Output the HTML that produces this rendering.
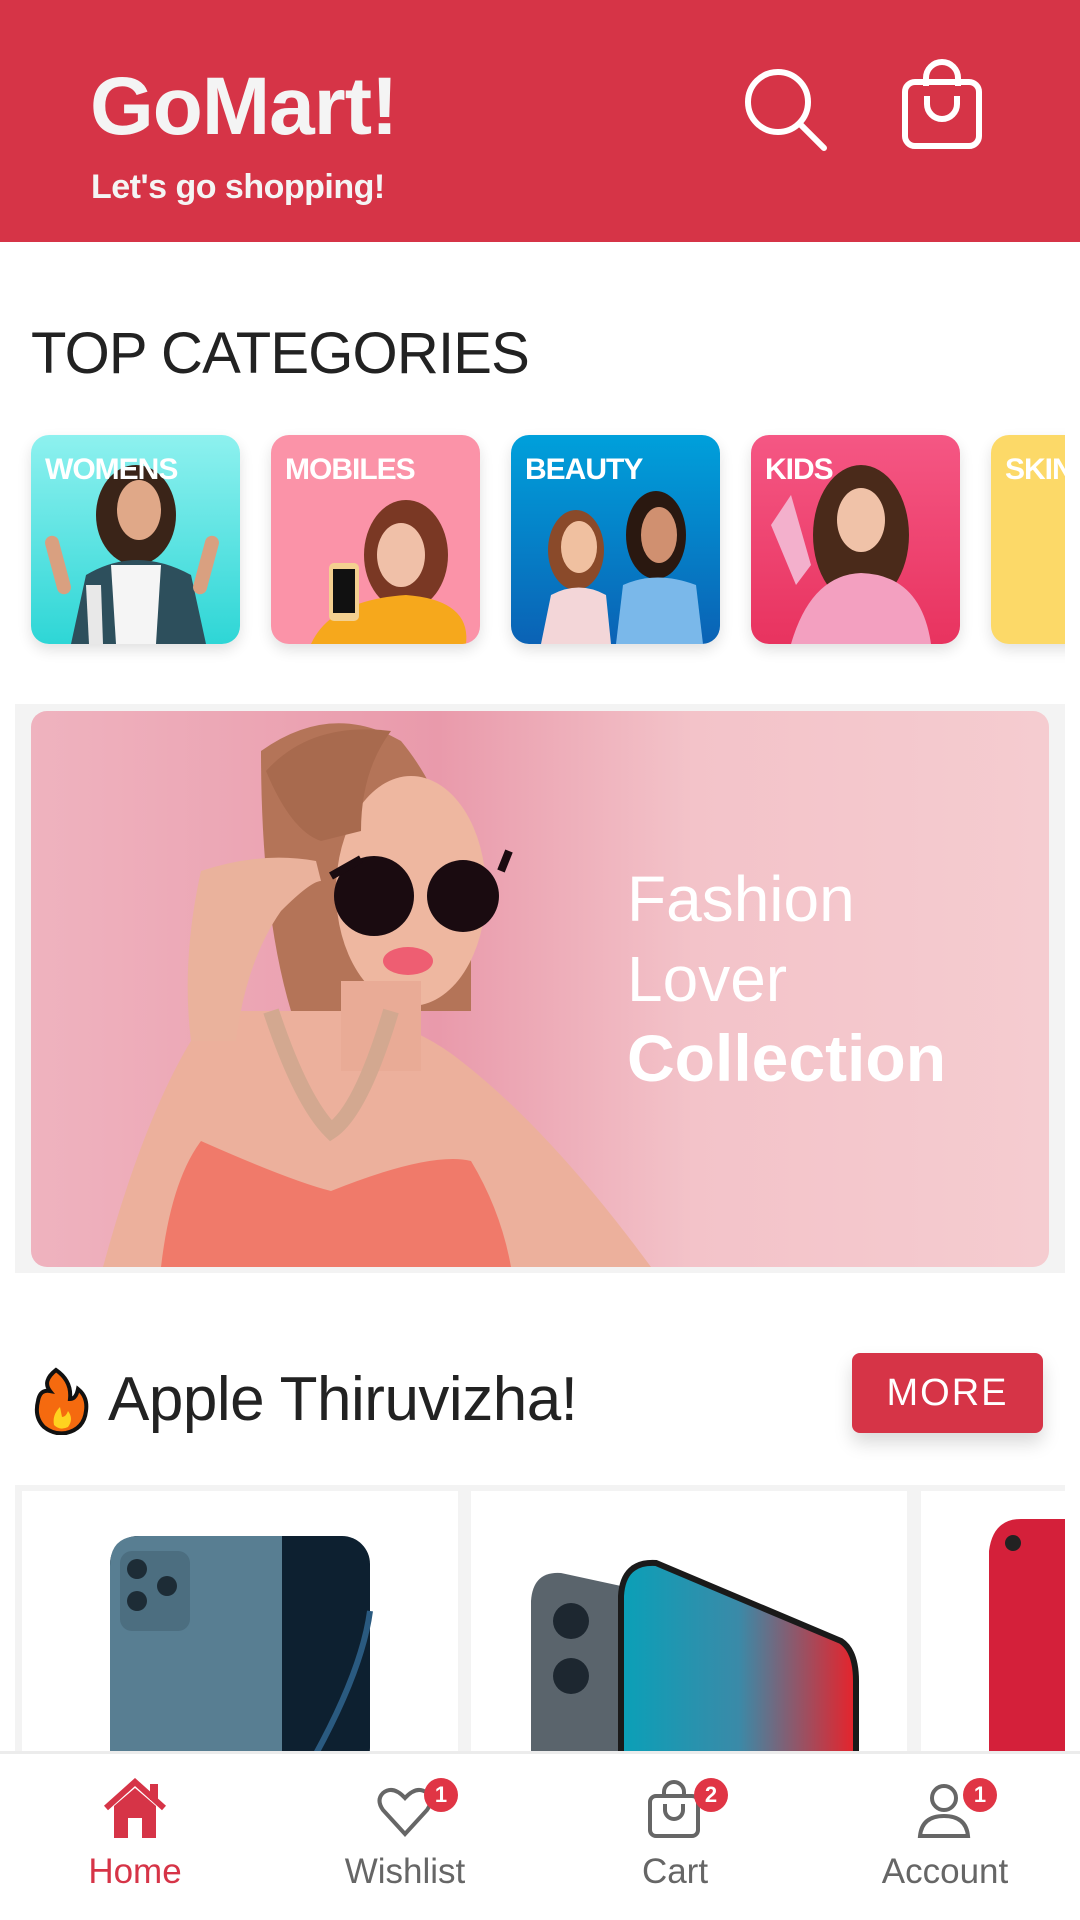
<!DOCTYPE html>
<html><head><meta charset="utf-8">
<style>
*{margin:0;padding:0;box-sizing:border-box}
body{width:1080px;height:1920px;overflow:hidden;background:#fff;font-family:"Liberation Sans",sans-serif;position:relative}
.abs{position:absolute}
.hdr{left:0;top:0;width:1080px;height:242px;background:#d63447}
.title{left:90px;top:60px;color:#f4f4f4;font-size:82px;font-weight:bold;letter-spacing:-1px}
.sub{left:91px;top:168px;color:#f4f4f4;font-size:34px;font-weight:bold;letter-spacing:-0.5px}
.tc{left:31px;top:320px;font-size:58px;color:#222;letter-spacing:-0.8px}
.clip{left:0;top:420px;width:1065px;height:250px;overflow:hidden}
.tile{top:15px;width:209px;height:209px;border-radius:18px;overflow:hidden;box-shadow:0 6px 14px rgba(0,0,0,.12)}
.tile span{position:absolute;left:14px;top:18px;color:#fff;font-weight:bold;font-size:30px;letter-spacing:-1px;z-index:2}
.tile svg{position:absolute;left:0;top:0}
.bannerbg{left:15px;top:704px;width:1050px;height:569px;background:#f3f3f3}
.banner{left:31px;top:711px;width:1018px;height:556px;border-radius:16px;overflow:hidden;background:linear-gradient(90deg,#efb3bf 0%,#e99aab 40%,#f3c3c9 65%,#f5ccd0 100%)}
.apple{left:108px;top:1364px;font-size:62px;color:#222;letter-spacing:-0.5px}
.more{left:852px;top:1353px;width:191px;height:80px;background:#d63447;border-radius:8px;color:#fff;font-size:38px;text-align:center;line-height:80px;letter-spacing:2px;box-shadow:0 10px 18px rgba(0,0,0,.15)}
.strip{left:15px;top:1485px;width:1050px;height:270px;background:#f3f3f3;overflow:hidden}
.card{top:6px;height:270px;background:#fff;position:absolute}
.nav{left:0;top:1751px;width:1080px;height:169px;background:#fff;border-top:3px solid #ececec}
.nl{top:1852px;font-size:35px;color:#666;text-align:center;width:240px}
.badge{width:34px;height:34px;border-radius:50%;background:#e03545;color:#fff;font-size:22px;font-weight:bold;text-align:center;line-height:34px}
</style></head><body>
<div class="abs hdr"></div>
<div class="abs title">GoMart!</div>
<div class="abs sub">Let's go shopping!</div>
<svg class="abs" style="left:740px;top:64px" width="95" height="90" viewBox="0 0 95 90"><circle cx="38" cy="38" r="30" fill="none" stroke="#fff" stroke-width="6"/><line x1="60" y1="60" x2="84" y2="84" stroke="#fff" stroke-width="6" stroke-linecap="round"/></svg>
<svg class="abs" style="left:900px;top:56px" width="86" height="96" viewBox="0 0 86 96"><rect x="5" y="26" width="74" height="64" rx="10" fill="none" stroke="#fff" stroke-width="6"/><path d="M26 30 V22 a16 16 0 0 1 32 0 V30" fill="none" stroke="#fff" stroke-width="6"/><path d="M27 40 v8 a15 15 0 0 0 30 0 v-8" fill="none" stroke="#fff" stroke-width="6"/></svg>

<div class="abs tc">TOP CATEGORIES</div>

<div class="abs clip">
<div class="abs tile" style="left:31px;background:linear-gradient(180deg,#8ef1ef,#2ed6d6)"><span>WOMENS</span>
<svg width="209" height="209"><ellipse cx="105" cy="80" rx="40" ry="50" fill="#3a2418"/><ellipse cx="108" cy="75" rx="22" ry="30" fill="#e0a888"/><path d="M40 209 L55 140 Q105 110 160 140 L175 209Z" fill="#2d4f5c"/><path d="M80 130 L130 130 L125 209 L85 209Z" fill="#f5f5f5"/><path d="M55 150 L70 150 L72 209 L58 209Z" fill="#e8e8e8"/><rect x="20" y="100" width="14" height="60" rx="7" fill="#d9a080" transform="rotate(-15 27 130)"/><rect x="168" y="100" width="14" height="60" rx="7" fill="#d9a080" transform="rotate(15 175 130)"/></svg></div>

<div class="abs tile" style="left:271px;background:#fb93a8"><span>MOBILES</span>
<svg width="209" height="209"><ellipse cx="135" cy="120" rx="42" ry="55" fill="#7a3824"/><ellipse cx="130" cy="120" rx="24" ry="32" fill="#f0c0a8"/><path d="M40 209 Q60 165 135 160 Q200 165 195 209Z" fill="#f6a81c"/><rect x="58" y="128" width="30" height="58" rx="5" fill="#f4d090"/><rect x="62" y="134" width="22" height="44" fill="#111"/></svg></div>

<div class="abs tile" style="left:511px;background:linear-gradient(180deg,#00a0db,#0a62b5)"><span>BEAUTY</span>
<svg width="209" height="209"><ellipse cx="65" cy="115" rx="28" ry="40" fill="#8a4a2a"/><ellipse cx="68" cy="112" rx="18" ry="26" fill="#f0c0a0"/><ellipse cx="145" cy="100" rx="30" ry="44" fill="#2a1810"/><ellipse cx="148" cy="100" rx="18" ry="28" fill="#d09070"/><path d="M30 209 L40 160 Q68 145 95 160 L100 209Z" fill="#f3d6d8"/><path d="M105 209 L112 150 Q145 135 185 150 L192 209Z" fill="#7ab8ea"/></svg></div>

<div class="abs tile" style="left:751px;background:linear-gradient(180deg,#f55784,#e8335f)"><span>KIDS</span>
<svg width="209" height="209"><ellipse cx="110" cy="100" rx="48" ry="70" fill="#4a2a1a"/><ellipse cx="110" cy="85" rx="24" ry="32" fill="#f0c2a8"/><path d="M40 209 Q60 140 110 138 Q170 140 180 209Z" fill="#f3a0c0"/><path d="M20 90 L40 60 L60 130 L45 150Z" fill="#f3b0cc"/></svg></div>

<div class="abs tile" style="left:991px;background:#fcd968"><span>SKIN</span></div>
</div>

<div class="abs bannerbg"></div>
<div class="abs banner">
<svg class="abs" style="left:0;top:0" width="1018" height="556" viewBox="0 0 1018 556">
<path d="M72 556 Q120 380 180 300 L310 300 Q380 310 430 350 Q520 420 620 556Z" fill="#ecb09c"/>
<path d="M230 40 Q300 -10 370 30 Q420 90 440 200 L440 300 L260 300 Q230 200 230 40Z" fill="#b47458"/>
<ellipse cx="380" cy="180" rx="75" ry="115" fill="#eeb7a0"/>
<path d="M235 60 Q280 10 360 20 Q330 60 330 120 L290 130 Q260 120 235 60Z" fill="#a86a4e"/>
<rect x="310" y="270" width="80" height="90" fill="#e9ab96"/>
<path d="M170 160 Q150 250 160 330 L205 330 Q215 250 250 200 Q280 170 290 170 L285 150 Q230 140 170 160Z" fill="#eab29c"/>
<circle cx="343" cy="185" r="40" fill="#1a0b10"/>
<circle cx="432" cy="185" r="36" fill="#1a0b10"/>
<path d="M300 165 L330 148 M470 160 L478 140" stroke="#1a0b10" stroke-width="8"/>
<ellipse cx="377" cy="250" rx="25" ry="14" fill="#ee5e72"/>
<path d="M240 300 Q270 390 300 420 Q330 400 360 300" fill="none" stroke="#d3a890" stroke-width="16"/>
<path d="M130 556 Q140 470 170 430 Q260 470 300 480 Q400 440 440 450 Q470 500 480 556Z" fill="#f07a6a"/>
<text x="596" y="210" fill="#fff" font-family="Liberation Sans" font-size="64">Fashion</text>
<text x="596" y="290" fill="#fff" font-family="Liberation Sans" font-size="64">Lover</text>
<text x="596" y="370" fill="#fff" font-family="Liberation Sans" font-size="66" font-weight="bold">Collection</text>
</svg>
</div>

<svg class="abs" style="left:32px;top:1367px" width="58" height="68" viewBox="0 0 58 68"><path d="M24 3 Q10 14 18 24 Q8 22 6 34 Q2 50 12 60 Q22 68 34 66 Q52 62 54 44 Q56 30 46 22 Q44 32 38 32 Q40 14 24 3Z" fill="#f56a0f" stroke="#111" stroke-width="4"/><path d="M28 40 Q20 48 22 58 Q28 64 36 60 Q42 52 36 44 Q34 50 30 50Z" fill="#ffd21f"/></svg>
<div class="abs apple">Apple Thiruvizha!</div>
<div class="abs more">MORE</div>

<div class="abs strip">
<div class="card" style="left:7px;width:436px">
<svg width="436" height="270"><rect x="88" y="45" width="260" height="240" rx="28" fill="#0d2030"/><path d="M88 75 Q88 45 118 45 L260 45 L260 270 L88 270Z" fill="#587e92"/><rect x="98" y="60" width="70" height="80" rx="12" fill="#4c6e80"/><circle cx="115" cy="78" r="10" fill="#1d2c36"/><circle cx="115" cy="110" r="10" fill="#1d2c36"/><circle cx="145" cy="95" r="10" fill="#1d2c36"/><path d="M290 270 Q340 180 348 120" stroke="#2a5a80" stroke-width="6" fill="none"/></svg></div>
<div class="card" style="left:456px;width:436px">
<svg width="436" height="270"><defs><linearGradient id="sg" x1="0" x2="1"><stop offset="0" stop-color="#0aa0b8"/><stop offset=".5" stop-color="#3a8aa8"/><stop offset="1" stop-color="#e8222a"/></linearGradient></defs><path d="M60 270 L60 110 Q62 80 90 82 L150 95 L150 270Z" fill="#5a646c"/><circle cx="100" cy="130" r="18" fill="#1d2730"/><circle cx="100" cy="185" r="18" fill="#1d2730"/><path d="M150 270 L150 105 Q152 70 185 72 L370 150 Q385 160 385 190 L385 270Z" fill="url(#sg)" stroke="#1a1a1a" stroke-width="6"/></svg></div>
<div class="card" style="left:906px;width:159px">
<svg width="159" height="270"><path d="M68 270 L68 60 Q72 28 100 28 L159 28 L159 270Z" fill="#d4203a"/><circle cx="92" cy="52" r="8" fill="#222"/></svg></div>
</div>

<div class="abs nav"></div>
<svg class="abs" style="left:102px;top:1778px" width="66" height="62" viewBox="0 0 66 62"><path d="M4 30 L33 4 L62 30" fill="none" stroke="#d63447" stroke-width="6"/><path d="M12 28 L33 10 L54 28 L54 60 L40 60 L40 40 L26 40 L26 60 L12 60Z" fill="#d63447"/><rect x="48" y="6" width="8" height="16" fill="#d63447"/></svg>
<div class="abs nl" style="left:15px;color:#d63447">Home</div>
<svg class="abs" style="left:376px;top:1786px" width="58" height="52" viewBox="0 0 58 52"><path d="M29 48 L7 24 Q0 14 7 7 Q17 -1 29 12 Q41 -1 51 7 Q58 14 51 24Z" fill="none" stroke="#666" stroke-width="4"/></svg>
<div class="abs badge" style="left:424px;top:1778px">1</div>
<div class="abs nl" style="left:285px">Wishlist</div>
<svg class="abs" style="left:646px;top:1780px" width="56" height="60" viewBox="0 0 56 60"><rect x="4" y="16" width="48" height="40" rx="6" fill="none" stroke="#666" stroke-width="4"/><path d="M18 18 V12 a10 10 0 0 1 20 0 V18" fill="none" stroke="#666" stroke-width="4"/><path d="M19 24 v6 a9 9 0 0 0 18 0 v-6" fill="none" stroke="#666" stroke-width="4"/></svg>
<div class="abs badge" style="left:694px;top:1778px">2</div>
<div class="abs nl" style="left:555px">Cart</div>
<svg class="abs" style="left:916px;top:1780px" width="56" height="60" viewBox="0 0 56 60"><circle cx="28" cy="18" r="12" fill="none" stroke="#666" stroke-width="4"/><path d="M4 56 Q6 36 28 36 Q50 36 52 56Z" fill="none" stroke="#666" stroke-width="4"/></svg>
<div class="abs badge" style="left:963px;top:1778px">1</div>
<div class="abs nl" style="left:825px">Account</div>
</body></html>
